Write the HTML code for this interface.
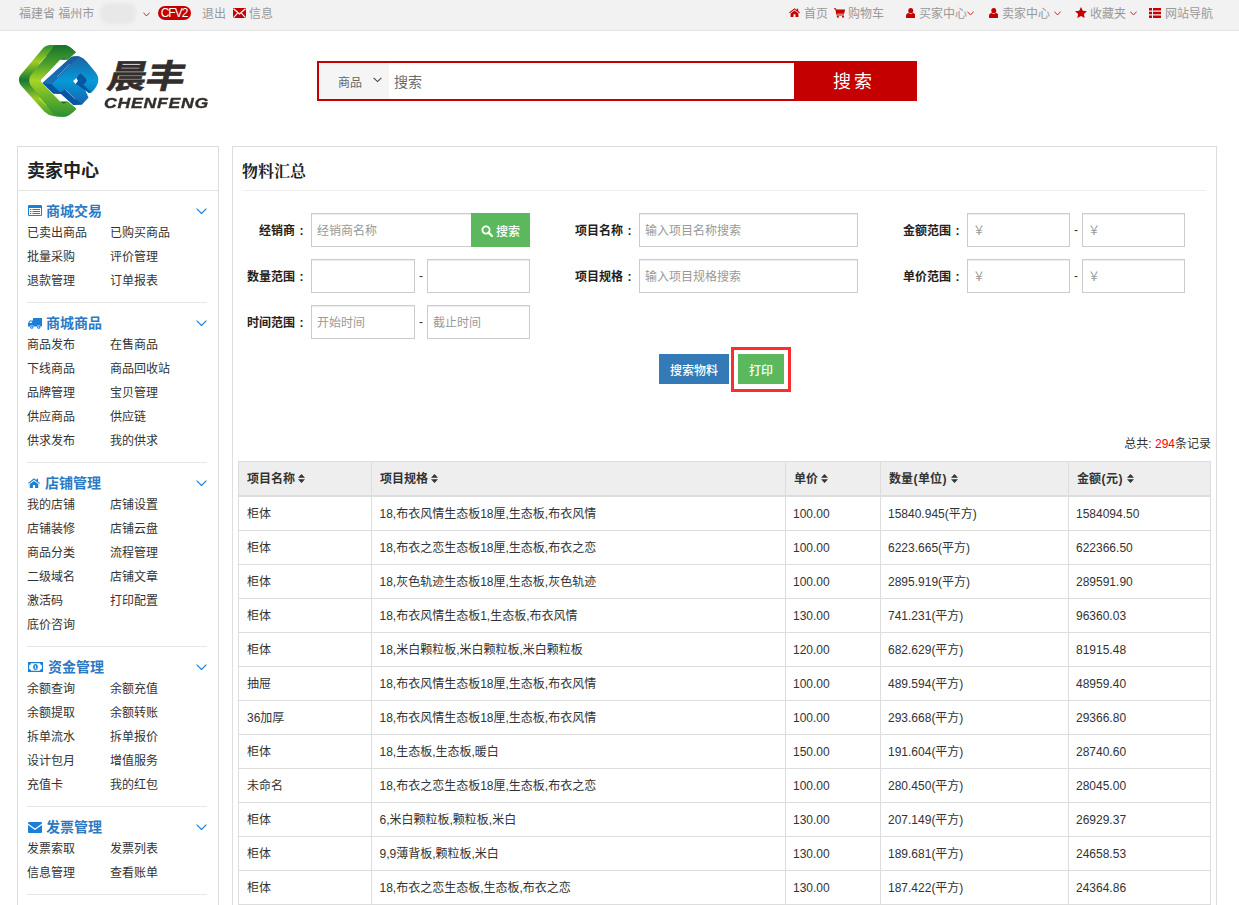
<!DOCTYPE html>
<html lang="zh-CN">
<head>
<meta charset="utf-8">
<title>物料汇总</title>
<style>
*{box-sizing:border-box;margin:0;padding:0}
html,body{width:1239px;height:905px;overflow:hidden;background:#fff}
body{font-family:"Liberation Sans","Noto Sans CJK SC",sans-serif;font-size:12px;color:#333;position:relative;line-height:1}
.abs{position:absolute;white-space:nowrap}
svg{display:block}
/* top bar */
#topbar{position:absolute;left:0;top:0;width:1239px;height:31px;background:#f2f2f2;border-bottom:1px solid #e5e5e5}
#topbar .t{position:absolute;top:7px;height:14px;line-height:14px;font-size:12px;color:#999;white-space:nowrap}
#topbar svg{position:absolute}
/* search */
#sbox{position:absolute;left:317px;top:61px;width:479px;height:40px;border:2px solid #c40000;background:#fff}
#ssel{position:absolute;left:0;top:0;width:70px;height:36px;background:#f5f5f5}
#sbtn{position:absolute;left:795px;top:61px;width:122px;height:40px;background:#c40000;color:#fff;font-size:18px;letter-spacing:3px;text-align:center;line-height:43px;padding-right:4px;overflow:hidden}
/* sidebar */
#side{position:absolute;left:17px;top:146px;width:202px;height:780px;border:1px solid #ddd;background:#fff}
#side h2{position:absolute;left:9px;top:14px;font-size:18px;line-height:20px;font-weight:bold;color:#222}
#side .hd{position:absolute;left:0;top:43px;width:200px;height:1px;background:#e4e4e4}
.sec{position:absolute;left:27px;font-size:14px;font-weight:bold;color:#2c7ac3;line-height:16px;white-space:nowrap}
.sec svg{position:absolute;left:1px;top:2px}
.sec span{position:absolute;left:19px;top:0}
.lk{position:absolute;font-size:12px;line-height:14px;color:#333;white-space:nowrap}
.dv{position:absolute;left:27px;width:180px;height:1px;background:#e6e6e6}
.chev{position:absolute;left:196px}
/* main */
#main{position:absolute;left:232px;top:146px;width:985px;height:780px;border:1px solid #ddd;background:#fff}
#title{position:absolute;left:242px;top:162px;font-family:"Liberation Serif","Noto Serif CJK SC",serif;font-weight:bold;font-size:16px;line-height:20px;color:#222}
#tline{position:absolute;left:243px;top:190px;width:963px;height:1px;background:#eee}
.lab{position:absolute;font-weight:bold;font-size:12px;line-height:14px;color:#222;text-align:right;white-space:nowrap}
.cl{display:inline-block;width:11px;padding-left:2px;text-align:center}
.inp{position:absolute;height:34px;border:1px solid #ccc;background:#fff;font-size:12px;line-height:34px;color:#999;padding-left:5px;white-space:nowrap;box-shadow:inset 0 1px 1px rgba(0,0,0,.075)}
.dash{position:absolute;font-size:12px;line-height:14px;color:#333}
.btn{position:absolute;height:30px;line-height:34px;overflow:hidden;font-weight:500;color:#fff;font-size:12px;text-align:center}
/* table */
#tbl{position:absolute;left:238px;top:461px;border-collapse:separate;border-spacing:0;table-layout:fixed;width:973px;font-size:12px;color:#333;border-top:1px solid #ddd;border-left:1px solid #ddd}
#tbl th,#tbl td{border-right:1px solid #ddd;border-bottom:1px solid #ddd;padding:0 0 0 8px;text-align:left;height:34px;line-height:14px;vertical-align:middle;white-space:nowrap;overflow:hidden}
#tbl th{background:#eee;font-weight:bold;height:35px;border-bottom:2px solid #ddd;color:#333}
#tbl th svg{display:inline-block;vertical-align:0;margin-left:3px}
#tbl td:nth-child(n+3){padding-left:7px}
#tbl td:nth-child(2){padding-left:7.5px}
.pp{display:inline-block;width:5px;text-align:center}
</style>
</head>
<body>
<div id="topbar">
<span class="t" style="left:19px">福建省 福州市</span>
<div style="position:absolute;left:100px;top:3px;width:36px;height:21px;border-radius:9px;background:#e8e8e8;filter:blur(1.5px)"></div>
<svg style="left:143px;top:11.5px" width="7" height="5" viewBox="0 0 7 5"><path d="M0.4 0.6 L3.5 4 L6.6 0.6" fill="none" stroke="#cf2b2b" stroke-width="1"/></svg>
<span class="abs" style="left:158px;top:6px;width:33px;height:14px;border-radius:7px;background:#c40000;color:#fff;font-size:12px;line-height:14px;text-align:center;letter-spacing:-1px;padding-right:1px">CFV2</span>
<span class="t" style="left:202px">退出</span>
<svg style="left:233px;top:8px" width="13" height="10" viewBox="0 0 13 10"><rect width="13" height="10" fill="#c40000"/><path d="M0.5 0.8 L6.5 6 L12.5 0.8" fill="none" stroke="#fff" stroke-width="1.3"/><path d="M0.5 9.6 L4.6 5.2 M12.5 9.6 L8.4 5.2" fill="none" stroke="#fff" stroke-width="1.1"/></svg>
<span class="t" style="left:249px">信息</span>

<svg style="left:789px;top:8px" width="11" height="9" viewBox="0 0 11 10" preserveAspectRatio="none"><path d="M5.5 0.3 L0 5 L0.7 5.8 L5.5 1.8 L10.3 5.8 L11 5 L9.2 3.4 V0.8 H7.8 V2.2 Z M5.5 2.9 L1.6 6.1 V10 H4.5 V7 H6.5 V10 H9.4 V6.1 Z" fill="#c40000"/></svg>
<span class="t" style="left:804px">首页</span>
<svg style="left:834px;top:8px" width="11.5" height="10" viewBox="0 0 12 11" preserveAspectRatio="none"><path d="M0 0.3 H2 L2.4 1.6 H11.6 L10.6 6.2 H3.4 L3.6 7.2 H10.4 V8.2 H2.8 L1.3 1.3 H0 Z" fill="#c40000"/><circle cx="4" cy="9.6" r="1.1" fill="#c40000"/><circle cx="9.4" cy="9.6" r="1.1" fill="#c40000"/></svg>
<span class="t" style="left:848px">购物车</span>
<svg class="usr" style="left:905.7px;top:7.5px" width="9.5" height="10.5" viewBox="0 0 10 10.5" preserveAspectRatio="none"><circle cx="5" cy="2.7" r="2.6" fill="#c40000"/><path d="M1.2 10.5 Q0 10.5 0 9.3 V8 C0 5.8 1.6 5 3 5 C3.6 5.6 4.3 5.9 5 5.9 C5.7 5.9 6.4 5.6 7 5 C8.4 5 10 5.8 10 8 V9.3 Q10 10.5 8.8 10.5 Z" fill="#c40000"/></svg>
<span class="t" style="left:919px">买家中心</span>
<svg style="left:967px;top:11px" width="7" height="5" viewBox="0 0 7 5"><path d="M0.4 0.6 L3.5 4 L6.6 0.6" fill="none" stroke="#cf2b2b" stroke-width="1"/></svg>
<svg class="usr" style="left:988.7px;top:7.5px" width="9.5" height="10.5" viewBox="0 0 10 10.5" preserveAspectRatio="none"><circle cx="5" cy="2.7" r="2.6" fill="#c40000"/><path d="M1.2 10.5 Q0 10.5 0 9.3 V8 C0 5.8 1.6 5 3 5 C3.6 5.6 4.3 5.9 5 5.9 C5.7 5.9 6.4 5.6 7 5 C8.4 5 10 5.8 10 8 V9.3 Q10 10.5 8.8 10.5 Z" fill="#c40000"/></svg>
<span class="t" style="left:1002px">卖家中心</span>
<svg style="left:1054px;top:11px" width="7" height="5" viewBox="0 0 7 5"><path d="M0.4 0.6 L3.5 4 L6.6 0.6" fill="none" stroke="#cf2b2b" stroke-width="1"/></svg>
<svg style="left:1075px;top:7px" width="12" height="11" viewBox="0 0 12 11"><path d="M6 0 L7.8 3.8 L12 4.3 L8.9 7.1 L9.7 11 L6 9 L2.3 11 L3.1 7.1 L0 4.3 L4.2 3.8 Z" fill="#c40000"/></svg>
<span class="t" style="left:1090px">收藏夹</span>
<svg style="left:1130px;top:11px" width="7" height="5" viewBox="0 0 7 5"><path d="M0.4 0.6 L3.5 4 L6.6 0.6" fill="none" stroke="#cf2b2b" stroke-width="1"/></svg>
<svg style="left:1149px;top:8px" width="12" height="10" viewBox="0 0 12 10"><path d="M0 0 H3 V2.5 H0 Z M4 0 H12 V2.5 H4 Z M0 3.7 H3 V6.2 H0 Z M4 3.7 H12 V6.2 H4 Z M0 7.4 H3 V9.9 H0 Z M4 7.4 H12 V9.9 H4 Z" fill="#c40000"/></svg>
<span class="t" style="left:1165px">网站导航</span>
</div>
<div id="logo">
<svg class="abs" style="left:10px;top:35px" width="100" height="90" viewBox="0 0 1006 905">
<defs>
<linearGradient id="g1" gradientUnits="userSpaceOnUse" x1="0" y1="35" x2="0" y2="868"><stop offset="0" stop-color="#2c8c35"/><stop offset="0.23" stop-color="#9fcd21"/><stop offset="0.49" stop-color="#187834"/><stop offset="0.75" stop-color="#9acb20"/><stop offset="1" stop-color="#3a9a32"/></linearGradient>
<linearGradient id="g2" gradientUnits="userSpaceOnUse" x1="0" y1="35" x2="0" y2="868"><stop offset="0" stop-color="#14732e"/><stop offset="0.27" stop-color="#4ca02d"/><stop offset="0.49" stop-color="#a8d524"/><stop offset="0.73" stop-color="#68b32b"/><stop offset="1" stop-color="#2a8e32"/></linearGradient>
<linearGradient id="g3" gradientUnits="userSpaceOnUse" x1="0" y1="70" x2="0" y2="855"><stop offset="0" stop-color="#1c62a4"/><stop offset="0.5" stop-color="#069ad8"/><stop offset="1" stop-color="#1462ae"/></linearGradient>
<linearGradient id="g4" gradientUnits="userSpaceOnUse" x1="600" y1="80" x2="100" y2="520"><stop offset="0" stop-color="#1b5a9c"/><stop offset="1" stop-color="#1874b8"/></linearGradient>
</defs>
<g transform="translate(60.4,70.4) scale(0.867)">
<path d="M35 440 Q30 415 50 385 L320 65 Q350 35 395 35 L560 35 Q620 40 695 120 L600 205 L555 180 L510 205 L285 440 Q278 450 285 460 L510 690 L555 720 L600 690 L700 775 Q620 865 555 868 L440 862 Q380 855 330 810 L50 495 Q32 470 35 440 Z" fill="url(#g1)"/>
<path d="M450 38 L560 35 Q620 40 695 120 L600 205 L555 180 L510 205 L285 440 Q278 450 285 460 L510 690 L555 720 L600 690 L700 775 Q620 865 555 868 L475 864 Q440 850 415 815 L165 495 Q140 445 165 395 L420 75 Q435 45 450 38 Z" fill="url(#g2)"/>
<path d="M510 205 L555 180 L600 205 Z M510 690 L555 720 L600 690 Z" fill="#0c6a30"/>
<path d="M262 258 L350 165 M268 648 L350 735" stroke="#fff" stroke-width="6" opacity="0.85" fill="none"/>
</g>
<g transform="translate(301.8,171) scale(0.6225)">
<path d="M40 500 L505 80 Q565 58 640 72 Q705 92 760 160 L900 330 Q952 400 940 475 Q925 565 830 655 L790 662 L725 605 L785 735 L680 850 L540 855 L340 680 L215 670 Z" fill="url(#g3)"/>
<path d="M40 500 L505 80 Q565 58 640 72 L600 100 L190 522 Z" fill="url(#g4)"/>
<path d="M40 500 L190 522 L320 650 L400 612 L680 850 L540 855 L340 680 L215 670 Z" fill="#0a55a3"/>
<path d="M590 420 L650 345 L740 425 Q768 465 735 497 L700 530 L830 655 L790 662 L620 540 L575 515 L610 470 Z" fill="#0657a3"/>
<path d="M535 467 L590 420 L612 470 L575 515 Z" fill="#fff"/>
<path d="M275 405 Q380 300 480 195 M420 618 L570 762" stroke="#fff" stroke-width="7" opacity="0.85" fill="none"/>
</g>
</svg>
<div class="abs" style="left:104px;top:54px;font-size:38px;line-height:40px;font-weight:700;-webkit-text-stroke:0.55px #332e2b;color:#332e2b;font-family:'Liberation Sans','Noto Sans CJK SC',sans-serif;transform:skewX(-14deg) scale(1.035,0.865);transform-origin:0 100%;letter-spacing:-1px">晨丰</div>
<div class="abs" style="left:104px;top:95px;font-size:15px;line-height:16px;font-weight:bold;font-style:italic;color:#332e2b;letter-spacing:0.6px;-webkit-text-stroke:0.35px #332e2b;transform:scale(1.18,1);transform-origin:0 50%">CHENFENG</div>
</div>
<div id="sbox"><div id="ssel"></div>
<span class="abs" style="left:19px;top:13px;font-size:12px;line-height:14px;color:#666">商品</span>
<svg class="abs" style="left:54px;top:14px" width="9" height="6" viewBox="0 0 9 6"><path d="M0.6 0.8 L4.5 4.6 L8.4 0.8" fill="none" stroke="#444" stroke-width="1.1"/></svg>
<span class="abs" style="left:75px;top:11px;font-size:14px;line-height:16px;color:#6a6a6a">搜索</span>
</div>
<div id="sbtn">搜索</div>
<div id="side"><h2>卖家中心</h2><div class="hd"></div></div>
<div id="sidec">
<div class="sec" style="top:203px"><svg width="14" height="11" viewBox="0 0 14 11"><path d="M1.2 0 H12.8 Q14 0 14 1.2 V9.8 Q14 11 12.8 11 H1.2 Q0 11 0 9.8 V1.2 Q0 0 1.2 0 Z M1 3 V10 H13 V3 Z M2 4 H3.4 V5 H2 Z M4.4 4 H12 V5 H4.4 Z M2 6 H3.4 V7 H2 Z M4.4 6 H12 V7 H4.4 Z M2 8 H3.4 V9 H2 Z M4.4 8 H12 V9 H4.4 Z" fill="#1a7fd6" fill-rule="evenodd"/></svg><span>商城交易</span></div>
<svg class="chev" style="top:207.7px" width="11" height="6.4" viewBox="0 0 11 6.4"><path d="M0.6 0.6 L5.5 5.5 L10.4 0.6" fill="none" stroke="#1a7fd6" stroke-width="1.2"/></svg>
<a class="lk" style="left:27px;top:226px">已卖出商品</a>
<a class="lk" style="left:110px;top:226px">已购买商品</a>
<a class="lk" style="left:27px;top:250px">批量采购</a>
<a class="lk" style="left:110px;top:250px">评价管理</a>
<a class="lk" style="left:27px;top:274px">退款管理</a>
<a class="lk" style="left:110px;top:274px">订单报表</a>
<div class="dv" style="top:302px"></div>
<div class="sec" style="top:315px"><svg style="top:3px" width="14" height="11" viewBox="0 0 14 11"><path d="M5 0 H14 V8.6 H12.6 A1.9 1.9 0 0 0 8.9 8.6 H5.6 A1.9 1.9 0 0 0 1.9 8.6 H0 V5 L1.8 2.4 H5 Z M1.2 5 H3.8 V3.4 H2.3 Z" fill="#1a7fd6" fill-rule="evenodd"/><circle cx="3.75" cy="9.2" r="1.6" fill="#1a7fd6"/><circle cx="10.75" cy="9.2" r="1.6" fill="#1a7fd6"/><circle cx="3.75" cy="9.2" r="0.6" fill="#fff"/><circle cx="10.75" cy="9.2" r="0.6" fill="#fff"/></svg><span>商城商品</span></div>
<svg class="chev" style="top:319.7px" width="11" height="6.4" viewBox="0 0 11 6.4"><path d="M0.6 0.6 L5.5 5.5 L10.4 0.6" fill="none" stroke="#1a7fd6" stroke-width="1.2"/></svg>
<a class="lk" style="left:27px;top:338px">商品发布</a>
<a class="lk" style="left:110px;top:338px">在售商品</a>
<a class="lk" style="left:27px;top:362px">下线商品</a>
<a class="lk" style="left:110px;top:362px">商品回收站</a>
<a class="lk" style="left:27px;top:386px">品牌管理</a>
<a class="lk" style="left:110px;top:386px">宝贝管理</a>
<a class="lk" style="left:27px;top:410px">供应商品</a>
<a class="lk" style="left:110px;top:410px">供应链</a>
<a class="lk" style="left:27px;top:434px">供求发布</a>
<a class="lk" style="left:110px;top:434px">我的供求</a>
<div class="dv" style="top:462px"></div>
<div class="sec" style="top:475px"><svg style="top:3px" width="12" height="10" viewBox="0 0 11 10" preserveAspectRatio="none"><path d="M5.5 0.3 L0 5 L0.7 5.8 L5.5 1.8 L10.3 5.8 L11 5 L9.2 3.4 V0.8 H7.8 V2.2 Z M5.5 2.9 L1.6 6.1 V10 H4.5 V7 H6.5 V10 H9.4 V6.1 Z" fill="#1a7fd6"/></svg><span style="left:18px">店铺管理</span></div>
<svg class="chev" style="top:479.7px" width="11" height="6.4" viewBox="0 0 11 6.4"><path d="M0.6 0.6 L5.5 5.5 L10.4 0.6" fill="none" stroke="#1a7fd6" stroke-width="1.2"/></svg>
<a class="lk" style="left:27px;top:498px">我的店铺</a>
<a class="lk" style="left:110px;top:498px">店铺设置</a>
<a class="lk" style="left:27px;top:522px">店铺装修</a>
<a class="lk" style="left:110px;top:522px">店铺云盘</a>
<a class="lk" style="left:27px;top:546px">商品分类</a>
<a class="lk" style="left:110px;top:546px">流程管理</a>
<a class="lk" style="left:27px;top:570px">二级域名</a>
<a class="lk" style="left:110px;top:570px">店铺文章</a>
<a class="lk" style="left:27px;top:594px">激活码</a>
<a class="lk" style="left:110px;top:594px">打印配置</a>
<a class="lk" style="left:27px;top:618px">底价咨询</a>
<div class="dv" style="top:646px"></div>
<div class="sec" style="top:659px"><svg style="top:3px" width="15" height="10" viewBox="0 0 15 10"><path d="M0 0 H15 V10 H0 Z M1.2 3 V7 A1.8 1.8 0 0 1 3 8.8 H12 A1.8 1.8 0 0 1 13.8 7 V3 A1.8 1.8 0 0 1 12 1.2 H3 A1.8 1.8 0 0 1 1.2 3 Z" fill="#1a7fd6" fill-rule="evenodd"/><ellipse cx="7.5" cy="5" rx="2.3" ry="2.9" fill="#1a7fd6"/><path d="M7 3.4 H8 V6.2 H8.6 V6.8 H6.5 V6.2 H7.1 V4.2 H6.6 V3.7 Z" fill="#fff"/></svg><span style="left:21px">资金管理</span></div>
<svg class="chev" style="top:663.7px" width="11" height="6.4" viewBox="0 0 11 6.4"><path d="M0.6 0.6 L5.5 5.5 L10.4 0.6" fill="none" stroke="#1a7fd6" stroke-width="1.2"/></svg>
<a class="lk" style="left:27px;top:682px">余额查询</a>
<a class="lk" style="left:110px;top:682px">余额充值</a>
<a class="lk" style="left:27px;top:706px">余额提取</a>
<a class="lk" style="left:110px;top:706px">余额转账</a>
<a class="lk" style="left:27px;top:730px">拆单流水</a>
<a class="lk" style="left:110px;top:730px">拆单报价</a>
<a class="lk" style="left:27px;top:754px">设计包月</a>
<a class="lk" style="left:110px;top:754px">增值服务</a>
<a class="lk" style="left:27px;top:778px">充值卡</a>
<a class="lk" style="left:110px;top:778px">我的红包</a>
<div class="dv" style="top:806px"></div>
<div class="sec" style="top:819px"><svg style="top:3px" width="14" height="11" viewBox="0 0 14 11"><path d="M0 1 Q0 0 1 0 H13 Q14 0 14 1 V1.6 L7 6.6 L0 1.6 Z M0 3 L7 8 L14 3 V10 Q14 11 13 11 H1 Q0 11 0 10 Z" fill="#1a7fd6"/></svg><span>发票管理</span></div>
<svg class="chev" style="top:823.7px" width="11" height="6.4" viewBox="0 0 11 6.4"><path d="M0.6 0.6 L5.5 5.5 L10.4 0.6" fill="none" stroke="#1a7fd6" stroke-width="1.2"/></svg>
<a class="lk" style="left:27px;top:842px">发票索取</a>
<a class="lk" style="left:110px;top:842px">发票列表</a>
<a class="lk" style="left:27px;top:866px">信息管理</a>
<a class="lk" style="left:110px;top:866px">查看账单</a>
<div class="dv" style="top:894px"></div>
</div>
<div id="main"></div>
<div id="title">物料汇总</div>
<div id="tline"></div>
<div id="form">
<div class="lab" style="left:216px;width:90px;top:224px">经销商<span class="cl">:</span></div>
<div class="inp" style="left:311px;top:213px;width:161px">经销商名称</div>
<div class="btn" style="left:471px;top:213px;width:59px;height:34px;line-height:34px;background:#5cb85c"><svg style="position:absolute;left:10px;top:12px" width="12" height="12" viewBox="0 0 12 12"><circle cx="5" cy="5" r="3.6" fill="none" stroke="#fff" stroke-width="1.8"/><path d="M7.6 7.6 L11 11" stroke="#fff" stroke-width="2.2" stroke-linecap="round"/></svg><span style="position:absolute;left:25px;top:2px">搜索</span></div>
<div class="lab" style="left:216px;width:90px;top:270px">数量范围<span class="cl">:</span></div>
<div class="inp" style="left:311px;top:259px;width:104px"></div>
<div class="dash" style="left:419px;top:269px">-</div>
<div class="inp" style="left:427px;top:259px;width:103px"></div>
<div class="lab" style="left:216px;width:90px;top:316px">时间范围<span class="cl">:</span></div>
<div class="inp" style="left:311px;top:305px;width:104px">开始时间</div>
<div class="dash" style="left:419px;top:315px">-</div>
<div class="inp" style="left:427px;top:305px;width:103px">截止时间</div>
<div class="lab" style="left:544px;width:90px;top:224px">项目名称<span class="cl">:</span></div>
<div class="inp" style="left:639px;top:213px;width:219px">输入项目名称搜索</div>
<div class="lab" style="left:544px;width:90px;top:270px">项目规格<span class="cl">:</span></div>
<div class="inp" style="left:639px;top:259px;width:219px">输入项目规格搜索</div>
<div class="lab" style="left:872px;width:90px;top:224px">金额范围<span class="cl">:</span></div>
<div class="inp" style="left:967px;top:213px;width:103px">￥</div>
<div class="dash" style="left:1074px;top:223px">-</div>
<div class="inp" style="left:1082px;top:213px;width:103px">￥</div>
<div class="lab" style="left:872px;width:90px;top:270px">单价范围<span class="cl">:</span></div>
<div class="inp" style="left:967px;top:259px;width:103px">￥</div>
<div class="dash" style="left:1074px;top:269px">-</div>
<div class="inp" style="left:1082px;top:259px;width:103px">￥</div>
<div class="btn" style="left:659px;top:354px;width:70px;background:#337ab7">搜索物料</div>
<div class="btn" style="left:738px;top:354px;width:46px;background:#5cb85c">打印</div>
<div class="abs" style="left:731px;top:347px;width:60px;height:45px;border:3px solid #fb2d2d"></div>
<div class="abs" style="left:1011px;width:200px;top:437px;text-align:right;font-size:12px;line-height:14px;color:#333">总共: <span style="color:#f00">294</span>条记录</div>
</div>
<table id="tbl"><colgroup><col style="width:133px"><col style="width:414px"><col style="width:95px"><col style="width:188px"><col style="width:142px"></colgroup>
<tr><th>项目名称<svg width="7" height="9" viewBox="0 0 7 9"><path d="M3.5 0 L7 3.7 H0 Z M0 5.3 H7 L3.5 9 Z" fill="#333"/></svg></th><th>项目规格<svg width="7" height="9" viewBox="0 0 7 9"><path d="M3.5 0 L7 3.7 H0 Z M0 5.3 H7 L3.5 9 Z" fill="#333"/></svg></th><th>单价<svg width="7" height="9" viewBox="0 0 7 9"><path d="M3.5 0 L7 3.7 H0 Z M0 5.3 H7 L3.5 9 Z" fill="#333"/></svg></th><th>数量<span class="pp">(</span>单位<span class="pp" style="width:6px;text-align:left;padding-left:0.5px">)</span><svg width="7" height="9" viewBox="0 0 7 9"><path d="M3.5 0 L7 3.7 H0 Z M0 5.3 H7 L3.5 9 Z" fill="#333"/></svg></th><th>金额<span class="pp">(</span>元<span class="pp" style="width:6px;text-align:left;padding-left:0.5px">)</span><svg width="7" height="9" viewBox="0 0 7 9"><path d="M3.5 0 L7 3.7 H0 Z M0 5.3 H7 L3.5 9 Z" fill="#333"/></svg></th></tr>
<tr><td>柜体</td><td>18,布衣风情生态板18厘,生态板,布衣风情</td><td>100.00</td><td>15840.945(平方)</td><td>1584094.50</td></tr>
<tr><td>柜体</td><td>18,布衣之恋生态板18厘,生态板,布衣之恋</td><td>100.00</td><td>6223.665(平方)</td><td>622366.50</td></tr>
<tr><td>柜体</td><td>18,灰色轨迹生态板18厘,生态板,灰色轨迹</td><td>100.00</td><td>2895.919(平方)</td><td>289591.90</td></tr>
<tr><td>柜体</td><td>18,布衣风情生态板1,生态板,布衣风情</td><td>130.00</td><td>741.231(平方)</td><td>96360.03</td></tr>
<tr><td>柜体</td><td>18,米白颗粒板,米白颗粒板,米白颗粒板</td><td>120.00</td><td>682.629(平方)</td><td>81915.48</td></tr>
<tr><td>抽屉</td><td>18,布衣风情生态板18厘,生态板,布衣风情</td><td>100.00</td><td>489.594(平方)</td><td>48959.40</td></tr>
<tr><td>36加厚</td><td>18,布衣风情生态板18厘,生态板,布衣风情</td><td>100.00</td><td>293.668(平方)</td><td>29366.80</td></tr>
<tr><td>柜体</td><td>18,生态板,生态板,暖白</td><td>150.00</td><td>191.604(平方)</td><td>28740.60</td></tr>
<tr><td>未命名</td><td>18,布衣之恋生态板18厘,生态板,布衣之恋</td><td>100.00</td><td>280.450(平方)</td><td>28045.00</td></tr>
<tr><td>柜体</td><td>6,米白颗粒板,颗粒板,米白</td><td>130.00</td><td>207.149(平方)</td><td>26929.37</td></tr>
<tr><td>柜体</td><td>9,9薄背板,颗粒板,米白</td><td>130.00</td><td>189.681(平方)</td><td>24658.53</td></tr>
<tr><td>柜体</td><td>18,布衣之恋生态板,生态板,布衣之恋</td><td>130.00</td><td>187.422(平方)</td><td>24364.86</td></tr>
<tr><td>柜体</td><td>18,暖白生态板,生态板,暖白</td><td>130.00</td><td>150.000(平方)</td><td>19500.00</td></tr>
</table>
</body>
</html>
